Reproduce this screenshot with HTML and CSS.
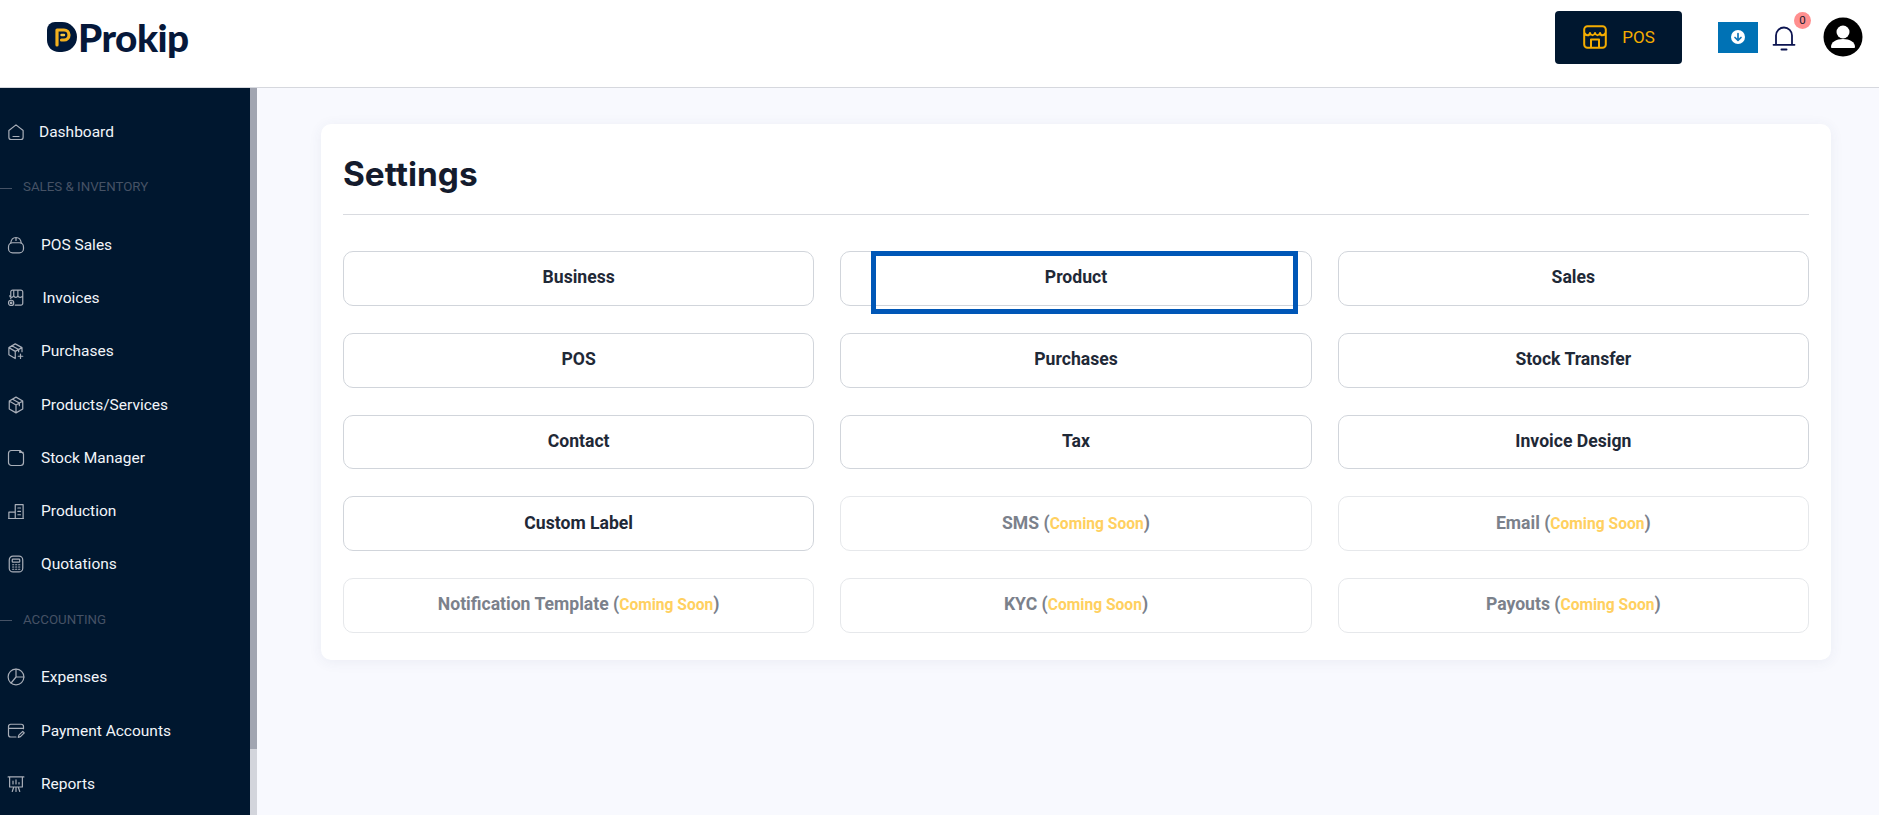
FILE: index.html
```html
<!DOCTYPE html>
<html lang="en">
<head>
<meta charset="utf-8">
<title>Prokip Settings</title>
<link rel="stylesheet" href="styles.css">
</head>
<body>
<header class="topbar">
  <a class="logo">
    <svg class="logo-mark" viewBox="0 0 30 30"><path fill="#00183a" d="M8 0H15a15 15 0 0 1 0 30H12C5 30 0 25 0 18V8a8 8 0 0 1 8-8Z"/><path fill="none" stroke="#f2b01e" stroke-width="3.2" stroke-linecap="round" stroke-linejoin="round" d="M10 23V8h7a5 5 0 0 1 0 10h-2.5"/><path fill="none" stroke="#f7c948" stroke-width="2.4" stroke-linecap="round" d="M14.5 13H17"/></svg>
    <span class="logo-text">Prokip</span>
  </a>
  <div class="top-actions">
    <button class="pos-btn">
      <svg class="pos-icon" viewBox="0 0 24 24"><path fill="none" stroke="#f5ad00" stroke-width="2" stroke-linejoin="round" d="M4.500 1.200H19.500A3.300 3.300 0 0 1 22.800 4.500V19.500A3.300 3.300 0 0 1 19.500 22.800H4.500A3.300 3.300 0 0 1 1.200 19.500V4.500A3.300 3.300 0 0 1 4.500 1.200ZM1.500 8c1.500 3 5 3 5.500 0 1 3 4 3 5 0 1 3 4 3 5 0 .5 3 4 3 5.500 0M8 22.500V14.500h8V22.500"/></svg>
      <span>POS</span>
    </button>
    <span class="download">
      <svg class="download-icon" viewBox="0 0 14 14"><circle cx="7" cy="7" r="7" fill="#fff"/><path fill="none" stroke="#0f75b8" stroke-width="1.700" stroke-linecap="round" stroke-linejoin="round" d="M7 3.500v6.500M4 7.500 7 10.300 10 7.500"/></svg>
    </span>
    <span class="bell">
      <svg class="bell-icon" viewBox="0 0 24 26"><path fill="none" stroke="#0c1450" stroke-width="1.800" stroke-linecap="round" d="M4 19.500V10.500a8 8 0 0 1 16 0V19.500M1.500 19.800H22.500"/><path fill="none" stroke="#0c1450" stroke-width="2" stroke-linecap="round" d="M9.500 24.500H14.500"/></svg>
      <span class="badge">0</span>
    </span>
    <svg class="avatar" viewBox="0 0 40 40"><circle cx="20" cy="20" r="19.500" fill="#000"/><circle cx="20" cy="15" r="6.500" fill="#fff"/><path fill="#fff" d="M8 30c0-5 5-8 12-8s12 3 12 8c0 .5-.5 1-1 1H9c-.5 0-1-.5-1-1Z"/></svg>
  </div>
</header>

<div class="shell">
  <aside class="sidebar">
    <nav class="nav">
      <a class="nav-item tight"><svg class="ico" viewBox="0 0 24 24"><path d="M2.500 10 12 2.500 21.500 10V19a3 3 0 0 1-3 3H5.500a3 3 0 0 1-3-3ZM8 18h8"/></svg><span>Dashboard</span></a>
      <div class="nav-section">SALES &amp; INVENTORY</div>
      <a class="nav-item"><svg class="ico" viewBox="0 0 24 24"><rect x="2" y="9" width="20" height="13.500" rx="5.500"/><path d="M5 9.500C5.500 5 8 2 12 2s6.500 3 7 7.500M12 2v4"/></svg><span>POS Sales</span></a>
      <a class="nav-item wide"><svg class="ico" viewBox="0 0 24 24"><path d="M5 13v-9a2.500 2.500 0 0 1 2.500-2.500h11A2.500 2.500 0 0 1 21 4v9M9 2v7M14.500 2v7M3.500 9c.5 3 4 3 5.500 0 1 3 4.500 3 5.500 0 1 3 5 3 6.500 0M21 13v6a2.500 2.500 0 0 1-2.500 2.500H11"/><circle cx="5.500" cy="18.500" r="3.500"/><circle cx="5.500" cy="18.500" r="1"/></svg><span>Invoices</span></a>
      <a class="nav-item"><svg class="ico" viewBox="0 0 24 24"><path d="M20 13V7.500L11 2.500 2.500 7.500v9.500l8.500 5M2.500 7.500 11 12.500l9-5M11 12.500V22M6.500 5 15.500 10V13M18 16v6M15 19h6"/></svg><span>Purchases</span></a>
      <a class="nav-item"><svg class="ico" viewBox="0 0 24 24"><path d="M12 1.500 21 6.800V17.200L12 22.500 3 17.200V6.800ZM3 6.800 12 12l9-5.200M12 12V22.500M7.500 4.200 16.500 9.400V13"/></svg><span>Products/Services</span></a>
      <a class="nav-item"><svg class="ico" viewBox="0 0 24 24"><path d="M2 6a4 4 0 0 1 4-4H17.500L22 6.500V18a4 4 0 0 1-4 4H6a4 4 0 0 1-4-4ZM17 2.500V4.500H21.500"/></svg><span>Stock Manager</span></a>
      <a class="nav-item"><svg class="ico" viewBox="0 0 24 24"><path d="M2.500 22V13.500H11V22M11 22V3.500H21.500V22ZM2 22H22M14.500 8H18M14.500 12.500H18M14.500 17H18"/></svg><span>Production</span></a>
      <a class="nav-item"><svg class="ico" viewBox="0 0 24 24"><rect x="3" y="1.500" width="18" height="21" rx="5"/><rect x="7" y="5.500" width="10" height="4" rx="1"/><path d="M7.500 13h1.500M11.500 13H13M15.500 13H17M7.500 16h1.500M11.500 16H13M15.500 16H17M7.500 19h1.500M11.500 19H13M15.500 19H17"/></svg><span>Quotations</span></a>
      <div class="nav-section">ACCOUNTING</div>
      <a class="nav-item"><svg class="ico" viewBox="0 0 24 24"><circle cx="12" cy="12" r="10.500"/><path d="M12 1.500V12H22.500M12 12 5.500 20"/></svg><span>Expenses</span></a>
      <a class="nav-item"><svg class="ico" viewBox="0 0 24 24"><path d="M12 20H5a3 3 0 0 1-3-3V6a3 3 0 0 1 3-3H19a3 3 0 0 1 3 3V9M2 8.500H22M15 20.500l.8-3L21 12.500l2 2-5 5Z"/></svg><span>Payment Accounts</span></a>
      <a class="nav-item"><svg class="ico" viewBox="0 0 24 24"><path d="M1.500 2.500H22.500M3.500 2.500V16H20.500V2.500M8 8v4M12 6.500V12M16 10v2M12 16v6M7 22l2-6M17 22l-2-6"/></svg><span>Reports</span></a>
    </nav>
    <div class="scroll-track"><div class="scroll-thumb"></div></div>
  </aside>

  <main class="content">
    <section class="card">
      <h1 class="title">Settings</h1>
      <div class="grid">
        <a class="tile">Business</a>
        <a class="tile has-focus">Product<span class="focus-ring"></span></a>
        <a class="tile">Sales</a>
        <a class="tile">POS</a>
        <a class="tile">Purchases</a>
        <a class="tile">Stock Transfer</a>
        <a class="tile">Contact</a>
        <a class="tile">Tax</a>
        <a class="tile">Invoice Design</a>
        <a class="tile">Custom Label</a>
        <a class="tile off"><span class="off-label">SMS (</span><span class="soon">Coming Soon</span><span class="off-label">)</span></a>
        <a class="tile off"><span class="off-label">Email (</span><span class="soon">Coming Soon</span><span class="off-label">)</span></a>
        <a class="tile off"><span class="off-label">Notification Template (</span><span class="soon">Coming Soon</span><span class="off-label">)</span></a>
        <a class="tile off"><span class="off-label">KYC (</span><span class="soon">Coming Soon</span><span class="off-label">)</span></a>
        <a class="tile off"><span class="off-label">Payouts (</span><span class="soon">Coming Soon</span><span class="off-label">)</span></a>
      </div>
    </section>
  </main>
</div>
</body>
</html>
```

FILE: styles.css
```css
* { box-sizing: border-box; }

html, body {
  margin: 0;
  height: 100%;
  overflow: hidden;
}

body {
  display: flex;
  flex-direction: column;
  font-family: Roboto, "Liberation Sans", sans-serif;
  background: #f8f9fe;
}

/* top bar */
.topbar {
  flex: 0 0 88px;
  display: flex;
  align-items: center;
  justify-content: space-between;
  background: #fff;
  border-bottom: 1px solid #d6d8de;
  padding: 0 16px 1px 47px;
}

.logo {
  display: flex;
  align-items: center;
  gap: 1px;
  margin-bottom: 12px;
}

.logo-mark {
  width: 30px;
  height: 30px;
}

.logo-text {
  font-family: Lato, sans-serif;
  font-weight: 900;
  font-size: 38.700px;
  line-height: 40px;
  letter-spacing: -0.5px;
  color: #06183a;
}

.top-actions {
  display: flex;
  align-items: center;
  margin-bottom: 12px;
}

.pos-btn {
  width: 127px;
  height: 53px;
  display: flex;
  align-items: center;
  justify-content: center;
  gap: 15px;
  padding: 0 0 0 1px;
  border: 0;
  border-radius: 4px;
  background: #00172f;
  color: #f5ad00;
  font: 400 17px Roboto, sans-serif;
}

.pos-icon {
  width: 24px;
  height: 24px;
}

.download {
  width: 40px;
  height: 31px;
  margin-left: 36px;
  background: #0072b5;
  display: flex;
  align-items: center;
  justify-content: center;
}

.download-icon {
  width: 14px;
  height: 14px;
}

.bell {
  position: relative;
  width: 24px;
  height: 26px;
  margin-left: 14px;
  margin-top: 2px;
}

.bell-icon {
  display: block;
  width: 24px;
  height: 26px;
}

.badge {
  position: absolute;
  top: -13px;
  right: -15px;
  width: 17px;
  height: 17px;
  border-radius: 50%;
  background: #ff8f8f;
  color: #1a1a2e;
  font-size: 11.500px;
  line-height: 16px;
  text-align: center;
}

.avatar {
  width: 40px;
  height: 40px;
  margin-left: 27px;
}

/* shell */
.shell {
  flex: 1;
  min-height: 0;
  display: flex;
}

.sidebar {
  flex: 0 0 257px;
  display: flex;
  overflow: hidden;
}

.nav {
  flex: 0 0 250px;
  display: flex;
  flex-direction: column;
  padding-top: 17px;
  background: #00172f;
}

.nav-item {
  flex: 0 0 53.200px;
  display: flex;
  align-items: center;
  gap: 16px;
  padding-left: 7px;
  color: #f2f5fa;
  font-size: 15.500px;
  font-weight: 400;
}

.nav-item.tight { gap: 14px; }
.nav-item.wide { gap: 17.500px; }

.nav-section {
  flex: 0 0 60.200px;
  display: flex;
  align-items: center;
  gap: 11px;
  padding-bottom: 3px;
  color: #465265;
  font-size: 13.300px;
}

.nav-section::before {
  content: "";
  width: 12px;
  height: 1px;
  margin-top: 3px;
  background: #465265;
}

.ico {
  flex: 0 0 18px;
  width: 18px;
  height: 18px;
  fill: none;
  stroke: #a9afb9;
  stroke-width: 1.600;
  stroke-linecap: round;
  stroke-linejoin: round;
}

.scroll-track {
  flex: 0 0 7px;
  background: #d3d5dc;
}

.scroll-thumb {
  height: 661px;
  background: #a1a5b1;
}

/* content */
.content {
  flex: 1;
  min-width: 0;
  padding: 36px 48px 0 64px;
}

.card {
  background: #fff;
  border-radius: 10px;
  padding: 22px 22px 27px;
  box-shadow: 0 2px 14px rgba(60, 70, 110, 0.07);
}

.title {
  margin: 0 0 36px;
  padding: 6px 0 18px;
  border-bottom: 1px solid #d9dbe0;
  font-family: Inter, sans-serif;
  font-size: 33.400px;
  line-height: 44px;
  font-weight: 700;
  color: #141b2d;
}

.grid {
  display: grid;
  grid-template-columns: repeat(3, 1fr);
  column-gap: 26px;
  row-gap: 27px;
}

.tile {
  position: relative;
  height: 54.750px;
  display: flex;
  align-items: center;
  justify-content: center;
  padding-bottom: 2px;
  background: #fff;
  border: 1px solid #d1d5db;
  border-radius: 10px;
  color: #1f2937;
  font-size: 17.600px;
  font-weight: 700;
  white-space: pre;
}

.tile.off {
  border-color: #e6e8eb;
}

.off-label {
  color: #7b818b;
}

.soon {
  color: #ffd060;
  font-size: 15.600px;
  padding-top: 2px;
}

.focus-ring {
  position: absolute;
  left: 30px;
  top: -1px;
  width: 427px;
  height: 63px;
  border: 5.500px solid #0057b7;
}
```
